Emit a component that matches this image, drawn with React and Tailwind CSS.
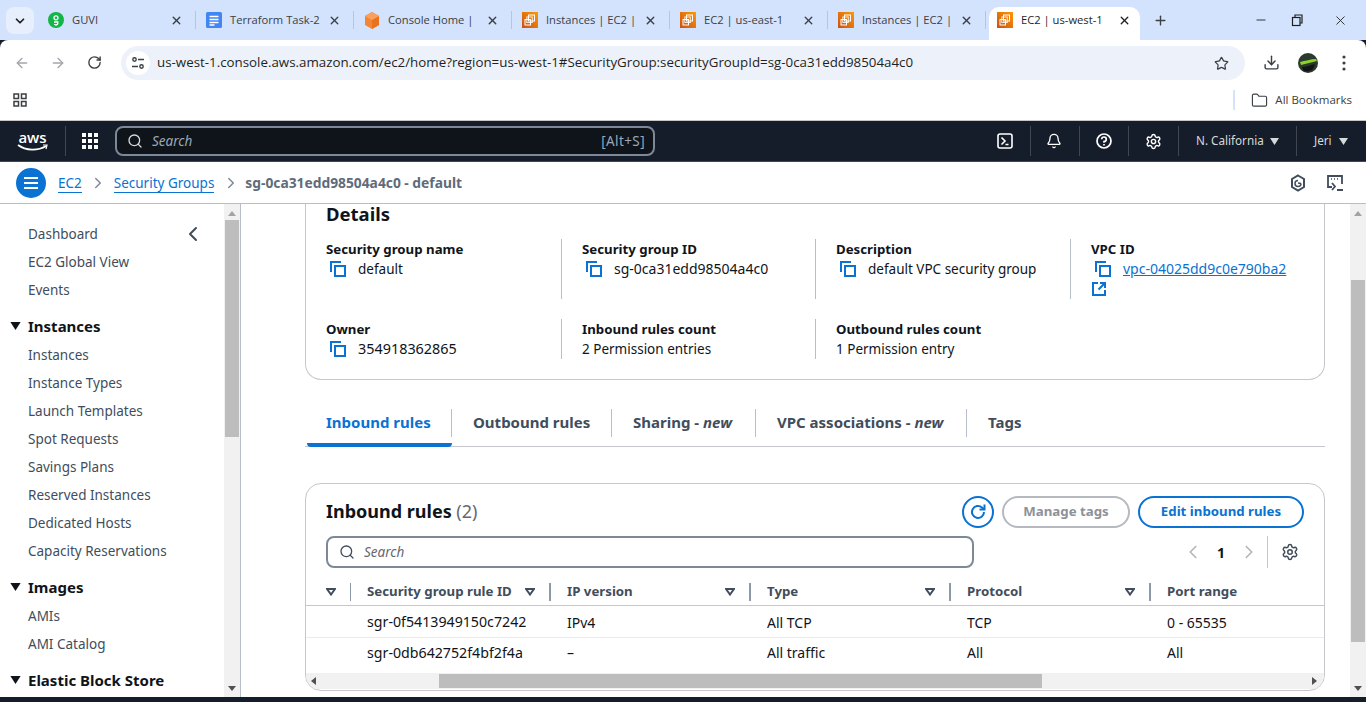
import React from 'react';
import { ArrowLeft, ArrowRight, RotateCw, Star, Download, X, Plus, Minus, Folder, ChevronDown, ChevronLeft, ChevronRight, Search, Bell, Settings } from 'lucide-react';

const BROWSER_FONT = 'font-["Open_Sans",sans-serif]';

// favicons
const Ec2Icon = () => (
  <svg width="16" height="16" viewBox="0 0 16 16" className="shrink-0">
    <defs>
      <linearGradient id="ec2g" x1="0" y1="1" x2="1" y2="0">
        <stop offset="0" stopColor="#c8511b" />
        <stop offset="1" stopColor="#ff9900" />
      </linearGradient>
    </defs>
    <rect width="16" height="16" fill="url(#ec2g)" />
    <rect x="6.5" y="3" width="6" height="6" fill="none" stroke="#fff" strokeWidth="1" />
    <rect x="4.8" y="5" width="5.5" height="5.5" fill="none" stroke="#fff" strokeWidth="1" opacity="0.85" />
    <rect x="3" y="7.5" width="5.5" height="5.5" fill="none" stroke="#fff" strokeWidth="1" />
  </svg>
);

const GuviIcon = () => (
  <svg width="16" height="16" viewBox="0 0 16 16" className="shrink-0">
    <circle cx="8" cy="8" r="8" fill="#12b547" />
    <circle cx="8" cy="5.8" r="2" fill="none" stroke="#fff" strokeWidth="1.3" />
    <path d="M6 10h3.8v1.2A1.8 1.8 0 0 1 8 13a1.8 1.8 0 0 1-1.6-1" fill="none" stroke="#fff" strokeWidth="1.3" />
  </svg>
);

const DocsIcon = () => (
  <svg width="16" height="16" viewBox="0 0 16 16" className="shrink-0">
    <rect width="16" height="16" rx="1.5" fill="#4285f4" />
    <path d="M3.5 4.5h9M3.5 7.5h9M3.5 10.5h9M3.5 13h5" stroke="#fff" strokeWidth="1.5" />
  </svg>
);

const ConsoleIcon = () => (
  <svg width="16" height="17" viewBox="0 0 16 17" className="shrink-0">
    <path d="M8 0l7 4v9l-7 4-7-4V4z" fill="#f58534" />
    <path d="M8 8l7-4v9l-7 4z" fill="#e9731c" />
    <path d="M8 0l7 4-7 4-7-4z" fill="#f9a15c" />
  </svg>
);

const tabs = [
  { title: 'GUVI', icon: <GuviIcon /> },
  { title: 'Terraform Task-2', icon: <DocsIcon /> },
  { title: 'Console Home |', icon: <ConsoleIcon /> },
  { title: 'Instances | EC2 |', icon: <Ec2Icon /> },
  { title: 'EC2 | us-east-1', icon: <Ec2Icon /> },
  { title: 'Instances | EC2 |', icon: <Ec2Icon /> },
];

const TabBar = () => (
  <div className={`flex h-10 shrink-0 bg-[#d3e3fd] text-[11.2px] text-[#3c4043] ${BROWSER_FONT}`}>
    <div className="ml-1.5 mt-[7px] mr-1 flex h-[27px] w-7 items-center justify-center rounded-lg bg-[#e8effc]">
      <ChevronDown size={14} strokeWidth={3} className="text-[#1f1f1f]" />
    </div>
    {tabs.map((tab, i) => (
      <div key={i} className="flex h-10 w-[158px] items-center pl-[10px]">
        {tab.icon}
        <span className="ml-2 w-[92px] whitespace-nowrap">{tab.title}</span>
        <X size={13} strokeWidth={2.5} className="ml-[6px] shrink-0 text-[#3c4043]" />
        <div className="ml-[12px] h-[18px] w-px shrink-0 bg-[#a8c7fa]" />
      </div>
    ))}
    <div className="ml-[3px] mt-[7px] flex h-[33px] w-[151px] items-center rounded-t-[10px] bg-white pb-[7px] pl-2 text-[#1f1f1f]">
      <Ec2Icon />
      <span className="ml-2 w-[90px] whitespace-nowrap">EC2 | us-west-1</span>
      <X size={13} strokeWidth={2.5} className="ml-[7px] shrink-0" />
    </div>
    <Plus size={15} strokeWidth={2.2} className="ml-[13px] mt-[13px] text-[#3c4043]" />
    <div className="ml-auto mt-[13px] flex items-start text-[#1f1f1f]">
      <Minus size={14} strokeWidth={1.5} className="mr-[22px]" />
      <svg width="14" height="14" viewBox="0 0 14 14" className="mr-[29px]" fill="none" stroke="#1f1f1f" strokeWidth="1.2">
        <rect x="2.5" y="4.5" width="7.5" height="8" />
        <path d="M5 4.5V2h7v8h-2" />
      </svg>
      <X size={15} strokeWidth={1.4} className="mr-[18px]" />
    </div>
  </div>
);

const AddressBar = () => (
  <div className={`flex h-10 shrink-0 items-start rounded-t-lg bg-white ${BROWSER_FONT}`}>
    <ArrowLeft size={16} strokeWidth={2} className="ml-[14px] mt-[15px] text-[#a3a6aa]" />
    <ArrowRight size={16} strokeWidth={2} className="ml-[20px] mt-[15px] text-[#a3a6aa]" />
    <RotateCw size={15} strokeWidth={2.2} className="ml-[21px] mt-[15px] text-[#3c4043]" />
    <div className="ml-[19px] mt-[6px] flex h-[34px] w-[1124px] items-center rounded-full bg-[#edf2fa]">
      <div className="ml-[5px] flex h-6 w-6 items-center justify-center rounded-full bg-white">
        <svg width="14" height="14" viewBox="0 0 14 14" fill="none" stroke="#3c4043" strokeWidth="1.4">
          <circle cx="3.5" cy="3.5" r="1.7" />
          <path d="M7 3.5h6M1 10.5h6" />
          <circle cx="10.5" cy="10.5" r="1.7" />
        </svg>
      </div>
      <span className="ml-[7px] text-[13.33px] text-[#1f1f1f]">us-west-1.console.aws.amazon.com/ec2/home?region=us-west-1#SecurityGroup:securityGroupId=sg-0ca31edd98504a4c0</span>
      <Star size={15} strokeWidth={2} className="ml-auto mr-[16px] text-[#3c4043]" />
    </div>
    <Download size={17} strokeWidth={2} className="ml-[18px] mt-[14px] text-[#3c4043]" />
    <svg width="20" height="20" viewBox="0 0 20 20" className="ml-[18px] mt-[13px]">
      <circle cx="10" cy="10" r="10" fill="#2b3a2e" />
      <path d="M2 9c5-1 11-3 16-3l1 2c-5 1-11 3-16 4z" fill="#8fd32a" />
      <path d="M4 14c4 0 8-2 13-3l-2 5c-3 3-8 3-10 1z" fill="#141414" />
    </svg>
    <svg width="4" height="16" viewBox="0 0 4 16" className="ml-[24px] mt-[15px]" fill="#3c4043">
      <circle cx="2" cy="2" r="1.6" />
      <circle cx="2" cy="8" r="1.6" />
      <circle cx="2" cy="14" r="1.6" />
    </svg>
  </div>
);

const BookmarksBar = () => (
  <div className={`flex h-[41px] shrink-0 items-center border-b border-[#c7c7c7] bg-white ${BROWSER_FONT}`}>
    <svg width="14" height="14" viewBox="0 0 14 14" className="ml-[13px]" fill="none" stroke="#3c4043" strokeWidth="1.5">
      <rect x="1" y="1" width="4.5" height="4.5" />
      <rect x="8.5" y="1" width="4.5" height="4.5" />
      <rect x="1" y="8.5" width="4.5" height="4.5" />
      <rect x="8.5" y="8.5" width="4.5" height="4.5" />
    </svg>
    <div className="ml-auto h-5 w-[2px] bg-[#d3e3fd]" />
    <Folder size={17} strokeWidth={1.6} className="ml-[16px] text-[#3c4043]" />
    <span className="ml-[7px] mr-[14px] text-[11.5px] text-[#3c4043]">All Bookmarks</span>
  </div>
);

const NavDivider = () => <div className="h-[30px] w-px bg-[#424650]" />;

const Caret = ({ className }) => (
  <svg width="9" height="7" viewBox="0 0 9 7" className={className} fill="currentColor">
    <path d="M0 0h9L4.5 7z" />
  </svg>
);

const AwsNav = () => (
  <div className="flex h-[41px] shrink-0 items-center border-b border-[#424650] bg-[#161d2a] text-[11.7px] text-[#d5dbdb]">
    <div className="ml-[17px] flex w-[31px] flex-col items-center">
      <span className="font-['Open_Sans',sans-serif] text-[15px] font-semibold leading-[14px] text-white">aws</span>
      <svg width="31" height="8" viewBox="0 0 31 8" fill="none">
        <path d="M1 1c8 6 20 6 28 1" stroke="#fff" strokeWidth="1.8" />
        <path d="M26 1l4 0-1 4" stroke="#fff" strokeWidth="1.2" />
      </svg>
    </div>
    <div className="ml-[17px]"><NavDivider /></div>
    <div className="ml-[16px] grid grid-cols-3 gap-[2px]">
      {Array.from({ length: 9 }).map((_, i) => (
        <div key={i} className="h-1 w-1 bg-white" />
      ))}
    </div>
    <div className="ml-[17px] flex h-[30px] w-[540px] items-center rounded-lg border-2 border-[#7d8998] bg-[#0f141a] font-['Noto_Sans',sans-serif]">
      <Search size={16} strokeWidth={2} className="ml-[10px] text-[#d5dbdb]" />
      <span className="ml-[9px] text-[13.5px] italic text-[#9ba7b6]">Search</span>
      <span className="ml-auto mr-[8px] text-[13.5px] tracking-[0.4px] text-[#9ba7b6]">[Alt+S]</span>
    </div>
    <svg width="16" height="16" viewBox="0 0 16 16" className="ml-[342px]" fill="none" stroke="#fff" strokeWidth="1.6">
      <rect x="1" y="1" width="14" height="14" rx="2" />
      <path d="M4.5 4.5L8 8l-3.5 3.5M8.5 11.5h3" />
    </svg>
    <div className="ml-[17px]"><NavDivider /></div>
    <Bell size={16} strokeWidth={2} className="ml-[15px] text-white" />
    <div className="ml-[17px]"><NavDivider /></div>
    <svg width="16" height="16" viewBox="0 0 16 16" className="ml-[16px]" fill="none" stroke="#fff" strokeWidth="1.7">
      <circle cx="8" cy="8" r="7" />
      <path d="M5.7 6.2A2.3 2.3 0 1 1 8 8.6v1.2M8 11v1.6" />
    </svg>
    <div className="ml-[16px]"><NavDivider /></div>
    <Settings size={17} strokeWidth={2} className="ml-[16px] text-white" />
    <div className="ml-[16px]"><NavDivider /></div>
    <span className="ml-[17px] w-[68px] whitespace-nowrap font-['Noto_Sans',sans-serif]">N. California</span>
    <Caret className="ml-[6px] text-[#d5dbdb]" />
    <div className="ml-[17px]"><NavDivider /></div>
    <span className="ml-[17px] w-[19px] font-['Noto_Sans',sans-serif]">Jeri</span>
    <Caret className="ml-[6px] text-[#d5dbdb]" />
  </div>
);

const Breadcrumbs = () => (
  <div className="flex h-[42px] shrink-0 items-center border-b border-[#b6bec9] bg-white text-[13.5px]">
    <div className="ml-4 flex h-[30px] w-[30px] flex-col items-center justify-center gap-[3px] rounded-full bg-[#0972d3]">
      <div className="h-[2px] w-[14px] bg-white" />
      <div className="h-[2px] w-[14px] bg-white" />
      <div className="h-[2px] w-[14px] bg-white" />
    </div>
    <a className="ml-3 mt-[2px] border-b border-[#0972d3] leading-[17px] text-[#0972d3]">EC2</a>
    <ChevronRight size={18} strokeWidth={2} className="ml-[7px] text-[#7d8998]" />
    <a className="ml-[7px] mt-[2px] border-b border-[#0972d3] leading-[17px] text-[#0972d3]">Security Groups</a>
    <ChevronRight size={18} strokeWidth={2} className="ml-[8px] text-[#7d8998]" />
    <span className="ml-[5px] mt-[2px] text-[13.8px] font-bold text-[#5f6b7a]">sg-0ca31edd98504a4c0 - default</span>
    <svg width="16" height="18" viewBox="0 0 16 18" className="ml-auto" fill="none" stroke="#414d5c" strokeWidth="2">
      <path d="M8 1.5l6 3.5v8l-6 3.5L2 13V5z" />
      <path d="M11 9.5A3 3 0 1 1 8 6.5M8 9l3 .5" strokeWidth="1.5" />
    </svg>
    <svg width="18" height="18" viewBox="0 0 18 18" className="ml-[20px] mr-[22px]" fill="none" stroke="#414d5c" strokeWidth="1.8">
      <path d="M6 13H2V2h14v8" />
      <path d="M5 5h1M8 5h1M11 5h1" strokeWidth="1.6" />
      <path d="M6 9l3 3.5L6 16M11 16h6" />
    </svg>
  </div>
);

const Scrollbar = ({ thumbTop, thumbHeight }) => (
  <div className="flex h-full w-4 shrink-0 flex-col items-center bg-[#f1f1f1]">
    <svg width="8" height="5" viewBox="0 0 8 5" className="mt-[7px] shrink-0" fill="#a3a3a3"><path d="M4 0l4 5H0z" /></svg>
    <div className={`w-[14px] shrink-0 bg-[#bdbdbd] ${thumbTop} ${thumbHeight}`} />
    <svg width="8" height="5" viewBox="0 0 8 5" className="mb-[6px] mt-auto shrink-0" fill="#505050"><path d="M0 0h8L4 5z" /></svg>
  </div>
);

const navGroups = [
  { items: ['Dashboard', 'EC2 Global View', 'Events'] },
  { title: 'Instances', items: ['Instances', 'Instance Types', 'Launch Templates', 'Spot Requests', 'Savings Plans', 'Reserved Instances', 'Dedicated Hosts', 'Capacity Reservations'] },
  { title: 'Images', items: ['AMIs', 'AMI Catalog'] },
  { title: 'Elastic Block Store', items: [] },
];

const Sidebar = () => (
  <div className="flex h-full w-[241px] shrink-0 border-r border-[#b6bec9] bg-white">
    <div className="relative w-56 overflow-hidden pt-[15px]">
      <ChevronLeft size={24} strokeWidth={2} className="absolute left-[181px] top-[18px] text-[#414d5c]" />
      {navGroups.map((group, i) => (
        <div key={i} className={i > 0 ? 'mt-[9px]' : ''}>
          {group.title && (
            <div className="flex h-7 items-center text-[15px] font-bold text-[#0f141a]">
              <Caret className="ml-[10px] mr-[7px] h-[8px] w-[11px] text-[#0f141a]" />
              {group.title}
            </div>
          )}
          {group.items.map((item, j) => (
            <div key={j} className="flex h-7 items-center pl-7 pt-[2px] text-[13.5px] text-[#414d5c]">{item}</div>
          ))}
        </div>
      ))}
    </div>
    <Scrollbar thumbTop="mt-[4px]" thumbHeight="h-[217px]" />
  </div>
);

const CopyIcon = () => (
  <svg width="16" height="16" viewBox="0 0 16 16" className="shrink-0" fill="none" stroke="#0972d3" strokeWidth="2">
    <path d="M1 11V1h10" />
    <rect x="5" y="5" width="10" height="10" />
  </svg>
);

const Field = ({ label, value, copy, divider, className, valueClass = 'text-[13.5px]', children }) => (
  <div className={`${divider ? 'border-r border-[#b6bec9]' : ''} ${className}`}>
    <div className="text-[13.25px] font-bold leading-5 text-[#0f141a]">{label}</div>
    {children || (
      <div className={`flex items-center leading-5 text-[#0f141a] ${valueClass}`}>
        {copy && <span className="ml-1 mr-[12px]"><CopyIcon /></span>}
        {value}
      </div>
    )}
  </div>
);

const DetailsCard = () => (
  <div className="h-[176px] rounded-b-2xl border border-t-0 border-[#c6c6cd] bg-white pl-5">
    <h2 className="h-[35px] text-[18.5px] font-bold leading-[20px] text-[#0f141a]">Details</h2>
    <div className="grid grid-cols-[256px_254px_255px_1fr] gap-y-5">
      <Field className="mr-5 h-[60px]" label="Security group name" value="default" copy divider />
      <Field className="mr-5 h-[60px]" label="Security group ID" value="sg-0ca31edd98504a4c0" valueClass="text-[14px]" copy divider />
      <Field className="mr-5 h-[60px]" label="Description" value="default VPC security group" copy divider />
      <Field className="h-[60px]" label="VPC ID">
        <div className="text-[14px] leading-5">
          <div className="flex items-center">
            <span className="ml-1 mr-[12px]"><CopyIcon /></span>
            <a className="text-[#0972d3] underline">vpc-04025dd9c0e790ba2</a>
          </div>
          <svg width="16" height="16" viewBox="0 0 16 16" className="mt-[2px]" fill="none" stroke="#0972d3" strokeWidth="2">
            <path d="M7 2H2v12h12V9" />
            <path d="M9 2h5v5M14 2L7.5 8.5" />
          </svg>
        </div>
      </Field>
      <Field className="mr-5 h-10" label="Owner" value="354918362865" valueClass="text-[14.4px]" copy divider />
      <Field className="mr-5 h-10" label="Inbound rules count" value="2 Permission entries" divider />
      <Field className="h-10" label="Outbound rules count" value="1 Permission entry" />
    </div>
  </div>
);

const tabItems = [
  { title: 'Inbound rules', active: true, width: 'w-[145px]', pad: 'pl-[19px]' },
  { title: 'Outbound rules', width: 'w-[160px]', pad: 'pl-[21px]' },
  { title: 'Sharing', isNew: true, width: 'w-[144px]', pad: 'pl-[21px]' },
  { title: 'VPC associations', isNew: true, width: 'w-[211px]', pad: 'pl-[21px]' },
  { title: 'Tags', width: 'w-[80px]', pad: 'pl-[21px]' },
];

const DetailTabs = () => (
  <div className="mt-[29px] flex h-[38px] border-b border-[#c6c6cd] pl-[2px]">
    {tabItems.map((tab, i) => (
      <div key={i} className={`h-[38px] ${tab.width} ${tab.active ? 'rounded-b-sm border-b-4 border-[#0972d3]' : ''}`}>
        <div className={`flex h-[28px] items-center whitespace-nowrap pb-[2px] text-[15px] font-bold ${tab.pad} ${i < tabItems.length - 1 ? 'border-r border-[#b6bec9]' : ''} ${tab.active ? 'text-[#0972d3]' : 'text-[#414d5c]'}`}>
          {tab.title}
          {tab.isNew && <span className="whitespace-pre"> - <i>new</i></span>}
        </div>
      </div>
    ))}
  </div>
);

const columns = ['Security group rule ID', 'IP version', 'Type', 'Protocol', 'Port range'];
const rows = [
  ['sgr-0f5413949150c7242', 'IPv4', 'All TCP', 'TCP', '0 - 65535'],
  ['sgr-0db642752f4bf2f4a', '–', 'All traffic', 'All', 'All'],
];
const GRID = 'grid grid-cols-[45px_200px_200px_200px_200px_1fr]';

const SortIcon = () => (
  <svg width="10" height="8" viewBox="0 0 10 8" className="shrink-0" fill="none" stroke="#414d5c" strokeWidth="2">
    <path d="M1 1h8L5 6.5z" />
  </svg>
);

const HeaderCell = ({ label, last }) => (
  <div className="flex h-full items-center pl-4 text-[13.25px] font-bold text-[#414d5c]">
    {label}
    {!last && (
      <div className="ml-auto flex items-center">
        <SortIcon />
        <div className="ml-[14px] h-[18px] w-[2px] bg-[#8d99a8]" />
      </div>
    )}
  </div>
);

const RulesCard = () => (
  <div className="mt-9 h-[208px] overflow-hidden rounded-2xl border border-[#c6c6cd] bg-white">
    <div className="flex h-[52px] items-start pl-5 pr-5 pt-3">
      <h2 className="pt-[3px] text-[18px] font-bold leading-[24px] text-[#0f141a]">
        Inbound rules <span className="font-normal text-[#656871]">(2)</span>
      </h2>
      <div className="ml-auto flex items-center">
        <div className="flex h-8 w-8 items-center justify-center rounded-full border-2 border-[#0972d3]">
          <svg width="18" height="18" viewBox="0 0 18 18" fill="none" stroke="#0972d3" strokeWidth="2">
            <path d="M15 9a6 6 0 1 1-2-4.5L15 6" />
            <path d="M15.5 1.5V6.5h-5" />
          </svg>
        </div>
        <button className="ml-2 h-8 w-[128px] rounded-full border-2 border-[#b6b9bf] text-[13.25px] font-bold text-[#8d9199]">Manage tags</button>
        <button className="ml-2 h-8 w-[166px] rounded-full border-2 border-[#0972d3] text-[13.25px] font-bold text-[#0972d3]">Edit inbound rules</button>
      </div>
    </div>
    <div className="flex h-8 items-center pl-5">
      <div className="flex h-8 w-[648px] items-center rounded-lg border-2 border-[#7d8998]">
        <Search size={16} strokeWidth={2} className="ml-[11px] text-[#414d5c]" />
        <span className="ml-[9px] text-[13.5px] italic text-[#656871]">Search</span>
      </div>
      <ChevronLeft size={22} strokeWidth={1.8} className="ml-[208px] text-[#b4b4bb]" />
      <span className="ml-[13px] w-2 text-[14px] font-bold text-[#0f141a]">1</span>
      <ChevronRight size={22} strokeWidth={1.8} className="ml-[13px] text-[#b4b4bb]" />
      <div className="ml-[7px] h-8 w-px bg-[#c6c6cd]" />
      <Settings size={18} strokeWidth={2} className="ml-[13px] text-[#414d5c]" />
    </div>
    <div className={`${GRID} mt-2 h-[30px] border-b border-[#c6c6cd] pt-[2px]`}>
      <div className="flex h-full items-center">
        <span className="ml-5"><SortIcon /></span>
        <div className="ml-[14px] h-[18px] w-[2px] bg-[#8d99a8]" />
      </div>
      {columns.map((col, i) => (
        <HeaderCell key={col} label={col} last={i === columns.length - 1} />
      ))}
    </div>
    {rows.map((row, i) => (
      <div key={i} className={`${GRID} items-center pt-[1px] ${i === 0 ? 'h-8 border-b border-[#e9ebed]' : 'h-[28px]'}`}>
        <div />
        {row.map((cell, j) => (
          <div key={j} className={`pl-4 text-[#0f141a] ${j === 0 ? 'text-[14.2px]' : 'text-[14px]'}`}>{cell}</div>
        ))}
      </div>
    ))}
    <div className="mt-[7px] flex h-4 items-center bg-[#f1f1f1]">
      <svg width="5" height="8" viewBox="0 0 5 8" className="ml-[5px] shrink-0" fill="#505050"><path d="M5 0v8L0 4z" /></svg>
      <div className="ml-[123px] h-[14px] w-[603px] bg-[#bdbdbd]" />
      <svg width="5" height="8" viewBox="0 0 5 8" className="ml-auto mr-[7px] shrink-0" fill="#505050"><path d="M0 0v8l5-4z" /></svg>
    </div>
  </div>
);

const App = () => {
  return (
    <div className="flex h-[702px] w-[1366px] flex-col overflow-hidden bg-[#161d2a] font-['Noto_Sans',sans-serif]">
      <TabBar />
      <AddressBar />
      <BookmarksBar />
      <AwsNav />
      <Breadcrumbs />
      <div className="flex h-[493px] shrink-0 bg-white">
        <Sidebar />
        <div className="ml-16 w-[1020px] shrink-0">
          <DetailsCard />
          <DetailTabs />
          <RulesCard />
        </div>
        <div className="ml-auto h-full">
          <Scrollbar thumbTop="mt-[64px]" thumbHeight="h-[362px]" />
        </div>
      </div>
    </div>
  );
};

export default App;
